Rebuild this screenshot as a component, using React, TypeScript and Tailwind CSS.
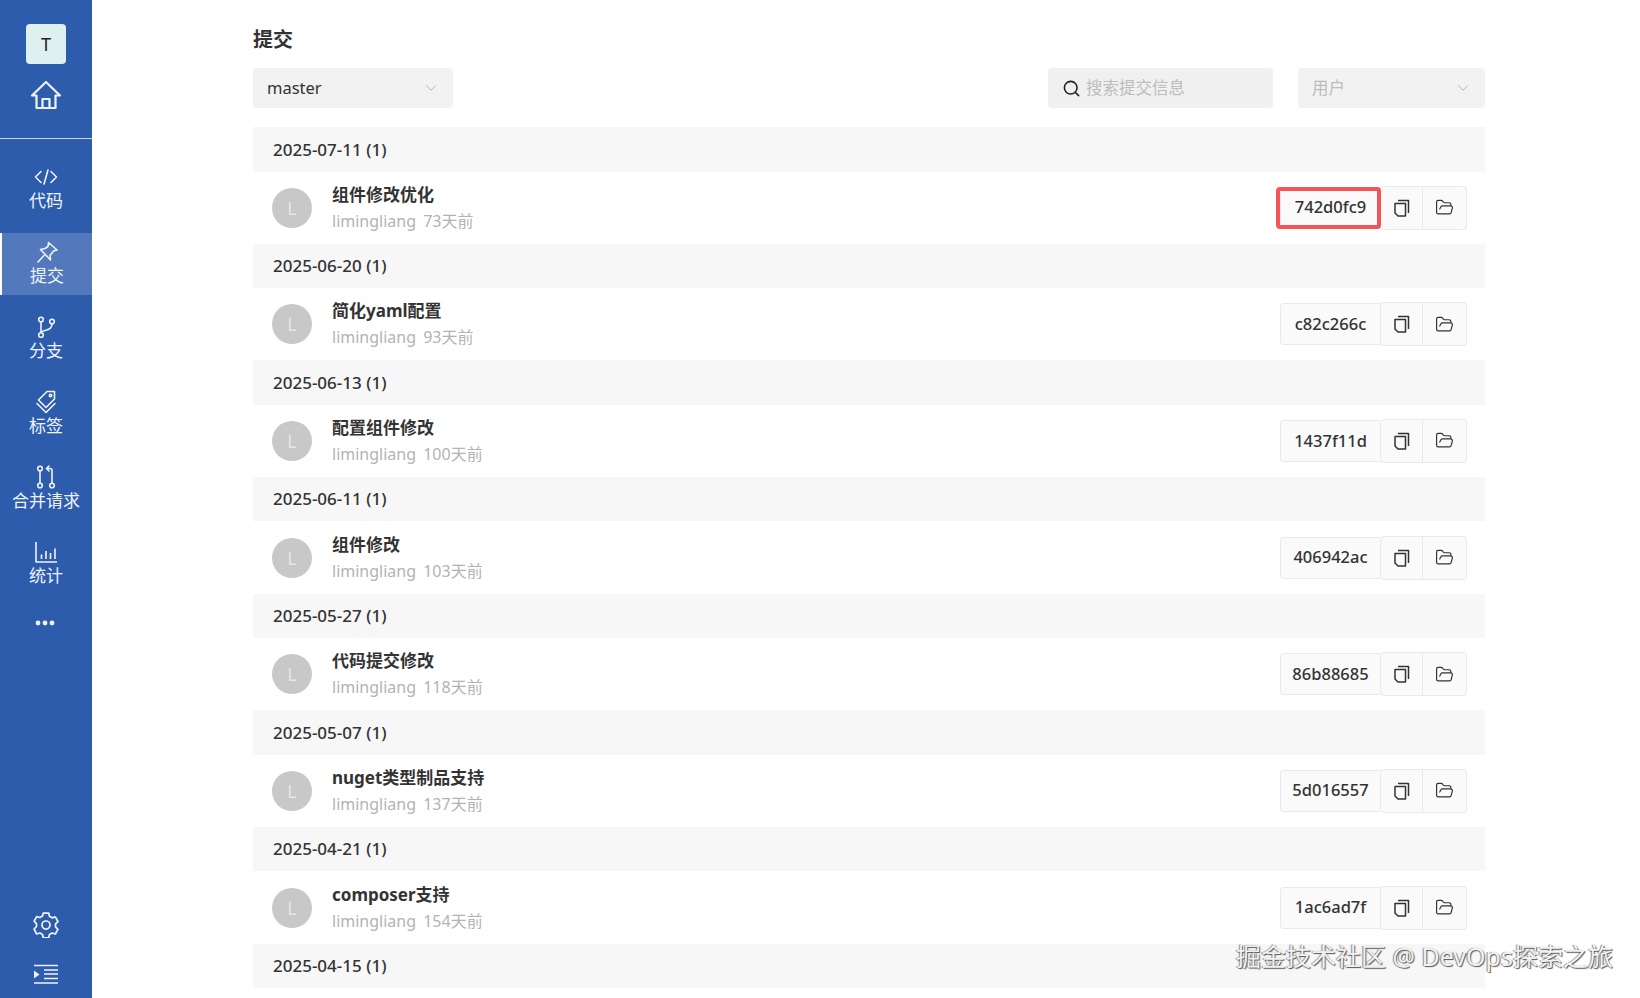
import React from 'react';
import { ChevronDown, FolderOpen, Search } from 'lucide-react';

const commits = [
  { date: '2025-07-11 (1)', title: '组件修改优化', ago: '73天前', hash: '742d0fc9', marked: true },
  { date: '2025-06-20 (1)', title: '简化yaml配置', ago: '93天前', hash: 'c82c266c' },
  { date: '2025-06-13 (1)', title: '配置组件修改', ago: '100天前', hash: '1437f11d' },
  { date: '2025-06-11 (1)', title: '组件修改', ago: '103天前', hash: '406942ac' },
  { date: '2025-05-27 (1)', title: '代码提交修改', ago: '118天前', hash: '86b88685' },
  { date: '2025-05-07 (1)', title: 'nuget类型制品支持', ago: '137天前', hash: '5d016557' },
  { date: '2025-04-21 (1)', title: 'composer支持', ago: '154天前', hash: '1ac6ad7f' },
];

const iconProps = {
  fill: 'none',
  stroke: 'currentColor',
  strokeWidth: 1.6,
  strokeLinecap: 'round' as const,
  strokeLinejoin: 'round' as const,
};

const CodeIcon = () => (
  <svg viewBox="0 0 24 24" width="24" height="24" {...iconProps}>
    <path d="M7 6.5 1.5 12 7 17.5M17 6.5l5.5 5.5-5.5 5.5M14 5l-4 14" />
  </svg>
);

const PinIcon = () => (
  <svg viewBox="0 0 24 24" width="24" height="24" {...iconProps}>
    <path d="M13.5 2.5 22 10l-3.5 1-3.5 4.5.5 4.5L5.5 9.5 10 8.5 13 6.5z" />
    <path d="M9 15.5 3 22" />
  </svg>
);

const BranchIcon = () => (
  <svg viewBox="0 0 24 24" width="24" height="24" {...iconProps}>
    <circle cx="7" cy="4.5" r="2.3" />
    <circle cx="7" cy="20" r="2.3" />
    <circle cx="18" cy="6.5" r="2.3" />
    <path d="M7 7v10.5M18 9c0 4-3 5.5-6 6.2-3 .7-5 1.2-5 2.3" />
  </svg>
);

const TagIcon = () => (
  <svg viewBox="0 0 24 24" width="24" height="24" {...iconProps}>
    <path d="M13 1.5h7.5V9L12 17.5 4.500 10z" />
    <circle cx="16.500" cy="5.500" r="1.200" />
    <path d="M3 13.500l9 9 9-9" />
  </svg>
);

const MergeIcon = () => (
  <svg viewBox="0 0 24 24" width="24" height="24" {...iconProps}>
    <circle cx="6" cy="3.500" r="2.300" />
    <circle cx="6" cy="20.500" r="2.300" />
    <circle cx="18" cy="20.500" r="2.300" />
    <path d="M6 6v12M18 18V5.500a2 2 0 0 0-2-2h-3M15 1l-2.500 2.500L15 6" />
  </svg>
);

const ChartIcon = () => (
  <svg viewBox="0 0 24 24" width="24" height="24" {...iconProps} strokeLinecap="butt">
    <path d="M2 2v20h21M7.500 14.500V19M12 11v8M16.500 13v6M21 8.500V19" />
  </svg>
);

const DotsIcon = () => (
  <svg viewBox="0 0 24 8" width="24" height="8" fill="currentColor">
    <circle cx="5" cy="4" r="2.400" />
    <circle cx="12" cy="4" r="2.400" />
    <circle cx="19" cy="4" r="2.400" />
  </svg>
);

const HomeIcon = () => (
  <svg viewBox="0 0 32 32" width="32" height="32" {...iconProps} strokeWidth={2.2}>
    <path d="M16 3 2 16.500h4.500V29h19V16.500H30z" />
    <path d="M12.500 29v-9h7v9" />
  </svg>
);

const GearIcon = () => (
  <svg viewBox="0 0 24 24" width="26" height="26" {...iconProps}>
    <path d="M9.500 2h5l.7 3 2.400 1.400 3-.9 2.400 4.300-2.200 2.200v2.800l2.200 2.200-2.400 4.300-3-.9-2.400 1.400-.7 3h-5l-.7-3-2.400-1.400-3 .9L1 16.700 3.200 14.500v-2.800L1 9.500l2.400-4.300 3 .9L8.800 4.700z" transform="translate(0 -1)" />
    <circle cx="12" cy="12" r="3.700" />
  </svg>
);

const IndentIcon = () => (
  <svg viewBox="0 0 24 24" width="24" height="24" fill="none" stroke="currentColor" strokeWidth="1.700">
    <path d="M0 3.500h24M10 12h14M10 16.500h14M0 21h24M10 8h14" />
    <path d="M0 8.500v8l5.500-4z" fill="currentColor" stroke="none" />
  </svg>
);

const CopyIcon = () => (
  <svg viewBox="0 0 16 18" width="16" height="18" fill="none" stroke="#333" strokeWidth="1.500" strokeLinejoin="round">
    <path d="M1 4.500h10.500V17H4l-3-3z" />
    <path d="M4 1.500h10.500V14" />
  </svg>
);

const navItems = [
  { label: '代码', icon: <CodeIcon /> },
  { label: '提交', icon: <PinIcon />, active: true },
  { label: '分支', icon: <BranchIcon /> },
  { label: '标签', icon: <TagIcon /> },
  { label: '合并请求', icon: <MergeIcon /> },
  { label: '统计', icon: <ChartIcon /> },
];

const Sidebar = () => (
  <aside className="w-[92px] h-full shrink-0 bg-[#2e5cac] text-[#eef3fb] flex flex-col">
    <div className="h-[139px] border-b border-[#c9d6ec] flex flex-col items-center pt-6">
      <div className="w-10 h-10 rounded bg-[#dff0f1] text-[#222] text-lg flex items-center justify-center">T</div>
      <div className="mt-[15px]">
        <HomeIcon />
      </div>
    </div>
    <nav className="flex flex-col gap-[13px] pt-[19px]">
      {navItems.map((item) => (
        <div
          key={item.label}
          className={`h-[62px] flex flex-col items-center justify-center text-[17px] leading-[24px] ${
            item.active ? 'bg-[#5378bb] border-l-2 border-white' : ''
          }`}
        >
          {item.icon}
          <span>{item.label}</span>
        </div>
      ))}
    </nav>
    <div className="flex justify-center pt-[24px] pr-[3px]">
      <DotsIcon />
    </div>
    <div className="mt-auto flex flex-col items-center gap-[24px] pb-[12px]">
      <GearIcon />
      <IndentIcon />
    </div>
  </aside>
);

const Toolbar = () => (
  <div className="flex items-center h-10 mt-[14px] mb-[19px] text-[16.500px]">
    <div className="w-[200px] h-10 rounded bg-[#f2f2f2] flex items-center justify-between pl-[14px] pr-[13px] text-[#333]">
      <span>master</span>
      <ChevronDown size={18} strokeWidth={1} className="text-[#999]" />
    </div>
    <div className="ml-auto w-[225px] h-10 rounded bg-[#f0f0f0] flex items-center gap-[5px] pl-[14px] text-[#bdbdbd]">
      <Search size={19} strokeWidth={2} className="text-[#222]" />
      <span>搜索提交信息</span>
    </div>
    <div className="ml-[25px] w-[187px] h-10 rounded bg-[#f2f2f2] flex items-center justify-between pl-[14px] pr-[13px] text-[#bdbdbd]">
      <span>用户</span>
      <ChevronDown size={18} strokeWidth={1} className="text-[#999]" />
    </div>
  </div>
);

const HashGroup = ({ hash, marked }: { hash: string; marked?: boolean }) => (
  <div className="relative flex items-center text-[#333]">
    <div className="w-[100px] h-[42px] border border-[#e9e9e9] border-r-0 rounded-l bg-[#fafafa] flex items-center justify-center text-[16.500px] font-medium">
      {hash}
    </div>
    <div className="w-[43px] h-[44px] border border-[#e9e9e9] rounded-l bg-[#fafafa] flex items-center justify-center">
      <CopyIcon />
    </div>
    <div className="w-[44px] h-[44px] border border-l-0 border-[#e9e9e9] rounded-r bg-[#fafafa] flex items-center justify-center">
      <FolderOpen size={19} strokeWidth={1.500} />
    </div>
    {marked && <div className="absolute left-[-4px] top-[1px] w-[105px] h-[42px] border-4 border-[#f7545a] rounded-sm" />}
  </div>
);

export default function App() {
  return (
    <div
      className="relative w-[1640px] h-[998px] overflow-hidden bg-white flex"
      style={{ fontFamily: '"Noto Sans", "Noto Sans CJK SC", sans-serif' }}
    >
      <Sidebar />
      <main className="w-[1232px] ml-[161px]">
        <h1 className="text-[20px] leading-[28px] font-bold text-[#333] pt-[26px] box-content">提交</h1>
        <Toolbar />
        {commits.map((c) => (
          <section key={c.hash}>
            <div className="h-[44.500px] bg-[#f7f7f7] flex items-center pl-[20px] text-[17px] font-medium text-[#333]">
              {c.date}
            </div>
            <div className="h-[72.170px] flex items-center pl-[19px] pr-[18px]">
              <div className="w-10 h-10 rounded-full bg-[#c8c8c8] text-[#e6e6e6] text-lg flex items-center justify-center">L</div>
              <div className="ml-[20px] flex flex-col">
                <span className="text-[17px] leading-[26px] font-bold text-[#333]">{c.title}</span>
                <span className="text-[16px] leading-[26px] text-[#b3b3b3]">
                  limingliang <span className="ml-[3px]">{c.ago}</span>
                </span>
              </div>
              <div className="ml-auto">
                <HashGroup hash={c.hash} marked={c.marked} />
              </div>
            </div>
          </section>
        ))}
        <div className="h-[44.500px] bg-[#f7f7f7] flex items-center pl-[20px] text-[17px] font-medium text-[#333]">
          2025-04-15 (1)
        </div>
      </main>
      <span className="absolute left-[1236px] top-[938px] text-[25px] leading-[36px] text-[#f2f2f2] [text-shadow:1px_1px_1px_#555,-1px_0_1px_#888] whitespace-nowrap">
        掘金技术社区 @ DevOps探索之旅
      </span>
    </div>
  );
}
